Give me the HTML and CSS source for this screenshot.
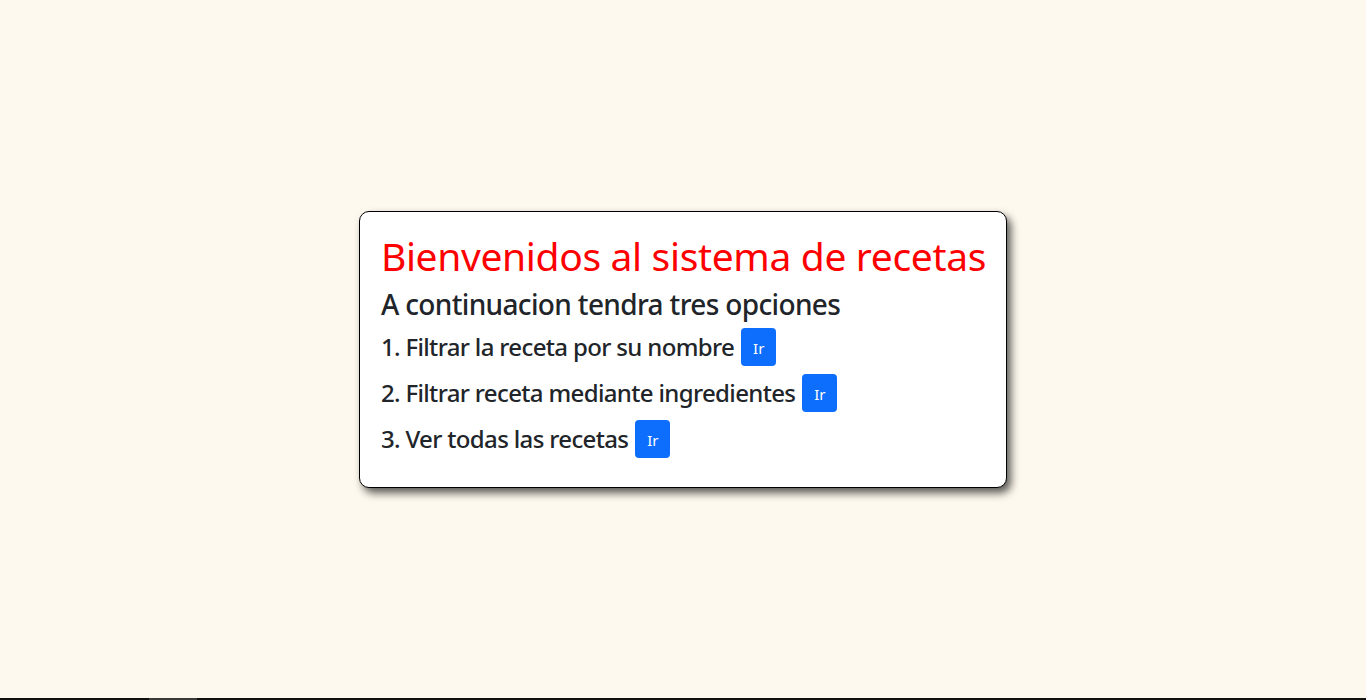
FILE: index.html
```html
<!DOCTYPE html>
<html lang="es">
<head>
<meta charset="utf-8">
<title>Recetas</title>
<link rel="stylesheet" href="styles.css">
</head>
<body>
<main class="page">
  <section class="card">
    <h1 class="title">Bienvenidos al sistema de recetas</h1>
    <h3 class="subtitle">A continuacion tendra tres opciones</h3>
    <div class="option"><span class="option-text">1. Filtrar la receta por su nombre</span><a class="btn" href="#">Ir</a></div>
    <div class="option"><span class="option-text">2. Filtrar receta mediante ingredientes</span><a class="btn" href="#">Ir</a></div>
    <div class="option"><span class="option-text">3. Ver todas las recetas</span><a class="btn" href="#">Ir</a></div>
  </section>
</main>
<div class="bottom-bar"><div class="bottom-thumb"></div></div>
</body>
</html>
```

FILE: styles.css
```css
* { box-sizing: border-box; }
html, body { margin: 0; padding: 0; }
body {
  height: 700px;
  background: #fef9ee;
  font-family: "Noto Sans", sans-serif;
  color: #212529;
  display: flex;
  flex-direction: column;
  overflow: hidden;
}
.page {
  flex: 1;
  display: flex;
  align-items: center;
  justify-content: center;
}
.card {
  background: #fff;
  border: 1px solid #000;
  border-radius: 10px;
  box-shadow: 4px 5px 8px rgba(0,0,0,0.65);
  padding: 20px 20px 21px 21px;
}
.title {
  margin: 0 0 8px;
  font-size: 39px;
  line-height: 48px;
  font-weight: 400;
  letter-spacing: -0.35px;
  color: #ff0000;
  white-space: nowrap;
}
.subtitle {
  margin: 0 0 8px;
  font-size: 28px;
  line-height: 32px;
  font-weight: 500;
  letter-spacing: -0.65px;
}
.option {
  display: flex;
  align-items: center;
  gap: 7px;
  height: 38px;
  margin-bottom: 8px;
}
.option-text {
  font-size: 24px;
  font-weight: 500;
  line-height: 29px;
  letter-spacing: -0.65px;
}
.btn {
  display: inline-flex;
  align-items: center;
  justify-content: center;
  width: 35px;
  height: 38px;
  padding-top: 2px;
  background: #0d6efd;
  color: #fff;
  border-radius: 4px;
  font-size: 15px;
  text-decoration: none;
}
.bottom-bar {
  height: 2px;
  background: #111;
  position: relative;
}
.bottom-thumb {
  position: absolute;
  left: 149px;
  width: 48px;
  top: 0;
  height: 2px;
  background: #3a3a3a;
}
```
